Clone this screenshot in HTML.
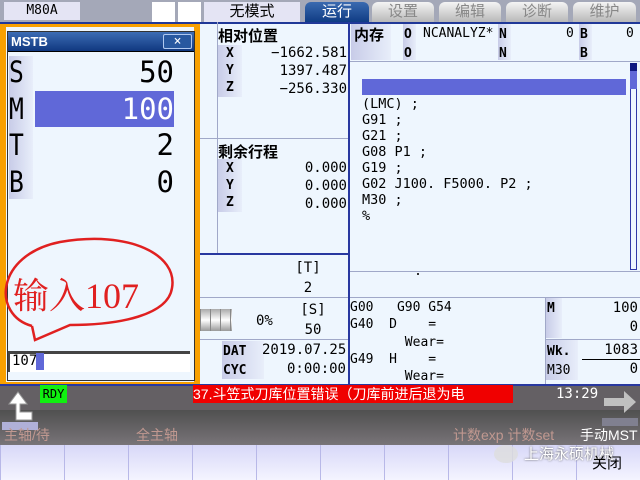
<!DOCTYPE html>
<html><head><meta charset="utf-8"><style>
*{margin:0;padding:0;box-sizing:border-box}
body{width:640px;height:480px;overflow:hidden;background:#eef6fe;position:relative;font-family:"DejaVu Sans Mono","Liberation Mono","Noto Sans CJK SC",monospace;color:#000}
.a{position:absolute}
.cj{font-family:"Liberation Sans","Noto Sans CJK SC",sans-serif}
.lab{background:linear-gradient(90deg,#c8cce8,#e8eefa);}
.num{font-size:14px;text-align:right}
.tab{position:absolute;top:2px;height:20px;border-radius:6px 6px 0 0;background:linear-gradient(#f4f4f4,#b8b8b8);color:#888;font-size:15px;text-align:center;line-height:20px;font-family:"Liberation Sans","Noto Sans CJK SC",sans-serif}
.g{font-size:13px;line-height:17px}
</style></head><body>
<div class="a" style="left:0;top:0;width:640px;height:23px;background:#a4a8b8"></div>
<div class="a" style="left:4px;top:2px;width:76px;height:18px;background:#e4e4f4;font-size:13px;text-align:center;line-height:18px">M80A</div>
<div class="a" style="left:152px;top:2px;width:23px;height:20px;background:#fff"></div>
<div class="a" style="left:178px;top:2px;width:23px;height:20px;background:#fff"></div>
<div class="a cj" style="left:204px;top:2px;width:96px;height:20px;background:#e4e4f4;font-size:15px;text-align:center;line-height:20px">无模式</div>
<div class="tab" style="left:305px;width:64px;background:linear-gradient(#3a6ab0,#103c84);color:#fff">运行</div>
<div class="tab" style="left:372px;width:62px">设置</div>
<div class="tab" style="left:439px;width:62px">编辑</div>
<div class="tab" style="left:506px;width:62px">诊断</div>
<div class="tab" style="left:573px;width:63px">维护</div>
<div class="a" style="left:0;top:22px;width:640px;height:2px;background:#203898"></div>
<div class="a" style="left:348px;top:22px;width:2px;height:364px;background:#2838a0"></div>
<div class="a" style="left:217px;top:22px;width:1px;height:232px;background:#a0a8c8"></div>
<div class="a" style="left:200px;top:138px;width:148px;height:1px;background:#a0a8c8"></div>
<div class="a" style="left:200px;top:253px;width:148px;height:2px;background:#2838a0"></div>
<div class="a" style="left:200px;top:297px;width:148px;height:1px;background:#a0a8c8"></div>
<div class="a" style="left:200px;top:339px;width:148px;height:1px;background:#a0a8c8"></div>
<div class="a cj" style="left:218px;top:25px;font-size:15px;font-weight:bold">相对位置</div>
<div class="a lab" style="left:218px;top:45px;width:24px;height:52px"></div>
<div class="a g" style="left:226px;top:45px;font-weight:bold">X<br>Y<br>Z</div>
<div class="a num" style="left:250px;top:44px;width:97px;line-height:18px">−1662.581<br>1397.487<br>−256.330</div>
<div class="a cj" style="left:218px;top:141px;font-size:15px;font-weight:bold">剩余行程</div>
<div class="a lab" style="left:218px;top:159px;width:24px;height:53px"></div>
<div class="a g" style="left:226px;top:160px;font-weight:bold">X<br>Y<br>Z</div>
<div class="a num" style="left:250px;top:159px;width:97px;line-height:18px">0.000<br>0.000<br>0.000</div>
<div class="a num" style="left:290px;top:258px;width:36px;text-align:center;line-height:20px">[T]<br>2</div>
<div class="a" style="left:200px;top:309px;width:32px;height:22px;background:repeating-linear-gradient(90deg,#888 0 1px,transparent 1px 10px),linear-gradient(#aaa,#fff,#999)"></div>
<div class="a num" style="left:256px;top:313px">0%</div>
<div class="a num" style="left:298px;top:300px;width:30px;text-align:center;line-height:20px">[S]<br>50</div>
<div class="a lab" style="left:222px;top:341px;width:42px;height:38px"></div>
<div class="a g" style="left:223px;top:342px;font-weight:bold;line-height:19px">DAT<br>CYC</div>
<div class="a num" style="left:262px;top:341px;width:84px;line-height:19px">2019.07.25<br>0:00:00</div>
<div class="a lab" style="left:351px;top:24px;width:40px;height:36px"></div>
<div class="a cj" style="left:354px;top:24px;font-size:15px;font-weight:bold">内存</div>
<div class="a lab" style="left:403px;top:24px;width:13px;height:36px"></div>
<div class="a lab" style="left:498px;top:24px;width:13px;height:36px"></div>
<div class="a lab" style="left:579px;top:24px;width:13px;height:36px"></div>
<div class="a g" style="left:404px;top:25px;font-weight:bold;line-height:19px">O<br>O</div>
<div class="a g" style="left:423px;top:25px">NCANALYZ*</div>
<div class="a g" style="left:499px;top:25px;font-weight:bold;line-height:19px">N<br>N</div>
<div class="a g" style="left:566px;top:25px">0</div>
<div class="a g" style="left:580px;top:25px;font-weight:bold;line-height:19px">B<br>B</div>
<div class="a g" style="left:626px;top:25px">0</div>
<div class="a" style="left:350px;top:61px;width:290px;height:1px;background:#a0a8c8"></div>
<div class="a" style="left:362px;top:79px;width:264px;height:16px;background:#6068d8"></div>
<div class="a" style="left:362px;top:96px;font-size:13.5px;line-height:16px;white-space:pre">(LMC) ;
G91 ;
G21 ;
G08 P1 ;
G19 ;
G02 J100. F5000. P2 ;
M30 ;
%</div>
<div class="a" style="left:630px;top:63px;width:7px;height:207px;border:1px solid #3038a8"></div>
<div class="a" style="left:630px;top:63px;width:7px;height:8px;background:#101880"></div>
<div class="a" style="left:630px;top:71px;width:7px;height:18px;background:#6068d8"></div>
<div class="a" style="left:350px;top:271px;width:290px;height:1px;background:#a0a8c8"></div>
<div class="a" style="left:417px;top:273px;width:2px;height:2px;background:#333"></div>
<div class="a" style="left:350px;top:297px;width:290px;height:1px;background:#a0a8c8"></div>
<div class="a" style="left:545px;top:298px;width:1px;height:87px;background:#a0a8c8"></div>
<div class="a g" style="left:350px;top:299px;white-space:pre;line-height:17.3px">G00   G90 G54
G40  D    =
       Wear=
G49  H    =
       Wear=</div>
<div class="a lab" style="left:546px;top:298px;width:16px;height:40px"></div>
<div class="a g" style="left:547px;top:300px;font-weight:bold">M</div>
<div class="a num" style="left:580px;top:299px;width:58px;line-height:19px">100<br>0</div>
<div class="a" style="left:546px;top:339px;width:94px;height:1px;background:#a0a8c8"></div>
<div class="a lab" style="left:546px;top:340px;width:32px;height:40px"></div>
<div class="a g" style="left:547px;top:342px;font-weight:bold;line-height:19px">Wk.<br><span style="font-weight:normal">M30</span></div>
<div class="a num" style="left:580px;top:341px;width:58px;line-height:19px">1083<br>0</div>
<div class="a" style="left:582px;top:359px;width:58px;height:1px;background:#000"></div>
<div class="a" style="left:0;top:24px;width:200px;height:362px;border:6px solid #f8a000;border-top-width:3px;border-bottom-width:4px;background:#eef6fe"></div>
<div class="a" style="left:7px;top:31px;width:188px;height:350px;border:1px solid #333;background:#eef6fe"></div>
<div class="a" style="left:8px;top:32px;width:186px;height:20px;background:linear-gradient(#3c6cb4,#103880);border-bottom:1px solid #000"></div>
<div class="a" style="left:11px;top:34px;color:#fff;font-size:13px;font-weight:bold;font-family:'Liberation Sans',sans-serif">MSTB</div>
<div class="a" style="left:163px;top:34px;width:29px;height:15px;border:1px solid #b0c8f0;border-radius:2px;background:#2858a0;color:#fff;font-size:13px;text-align:center;line-height:13px">×</div>
<div class="a lab" style="left:9px;top:56px;width:24px;height:143px"></div>
<div class="a" style="left:35px;top:91px;width:139px;height:36px;background:#6068d8"></div>
<div class="a" style="left:9px;top:54px;font-size:29px;line-height:36.5px;font-family:'DejaVu Sans Mono',monospace;transform:scaleX(.85);transform-origin:left">S<br>M<br>T<br>B</div>
<div class="a" style="left:100px;top:54px;width:74px;text-align:right;font-size:29px;line-height:36.5px;font-family:'DejaVu Sans Mono',monospace"><span>50</span><br><span style="color:#fff">100</span><br>2<br>0</div>
<svg class="a" style="left:0;top:230px" width="200" height="125"><path d="M32,96 C-8,85 -5,25 60,12 C130,0 178,25 172,58 C168,85 120,95 70,95 L35,110 L32,96" fill="none" stroke="#e02020" stroke-width="2.5"/></svg>
<div class="a" style="left:13px;top:268px;color:#e02020;font-size:36px;font-family:'Liberation Serif','Noto Serif CJK SC',serif">输入107</div>
<div class="a" style="left:8px;top:351px;width:182px;height:21px;border-top:3px solid #444;border-left:2px solid #444;background:#fff"></div>
<div class="a" style="left:12px;top:353px;font-size:14px">107</div>
<div class="a" style="left:36px;top:353px;width:8px;height:17px;background:#6068d8"></div>
<div class="a" style="left:0;top:385px;width:640px;height:25px;background:#646064"></div>
<div class="a" style="left:0;top:384px;width:640px;height:2px;background:#2838a0"></div>
<div class="a" style="left:0;top:410px;width:640px;height:35px;background:linear-gradient(#505050,#787478)"></div>
<div class="a" style="left:0;top:445px;width:640px;height:35px;background:repeating-linear-gradient(90deg,#b8b8e8 0 1px,transparent 1px 64px),linear-gradient(#d8d8f8,#f4f4ff)"></div>
<div class="a" style="left:40px;top:385px;width:27px;height:18px;background:#10f010;font-size:12px;line-height:18px;text-align:center">RDY</div>
<div class="a cj" style="left:193px;top:385px;width:320px;height:18px;background:#f00000;color:#fff;font-size:14px;line-height:18px;white-space:nowrap;overflow:hidden">37.斗笠式刀库位置错误（刀库前进后退为电</div>
<div class="a g" style="left:556px;top:386px;color:#fff;font-size:14px">13:29</div>
<svg class="a" style="left:2px;top:386px" width="36" height="46"><rect x="0" y="36" width="36" height="8" fill="#b0b0d8"/><path d="M14,34 V18 H7 L16,6 L25,18 H18 V26 H30 V34 Z" fill="#fff" stroke="#999"/></svg>
<svg class="a" style="left:602px;top:390px" width="36" height="38"><rect x="0" y="28" width="36" height="8" fill="#808090"/><path d="M2,8 H22 V1 L34,12 L22,23 V16 H2 Z" fill="#c0c0c0"/></svg>
<div class="a cj" style="left:4px;top:425px;color:#c09890;font-size:14px">主轴/待</div>
<div class="a cj" style="left:136px;top:425px;color:#c09890;font-size:14px">全主轴</div>
<div class="a cj" style="left:453px;top:425px;color:#c09890;font-size:14px">计数exp 计数set</div>
<div class="a cj" style="left:580px;top:425px;color:#fff;font-size:14px">手动MST</div>
<div class="a cj" style="left:524px;top:443px;color:#fff;font-size:15px;text-shadow:0 0 2px #555">上海永硕机械</div>
<div class="a" style="left:494px;top:445px;width:24px;height:18px;border-radius:50%;background:#ddd;opacity:.8"></div>
<div class="a cj" style="left:592px;top:452px;font-size:15px">关闭</div>
</body></html>
